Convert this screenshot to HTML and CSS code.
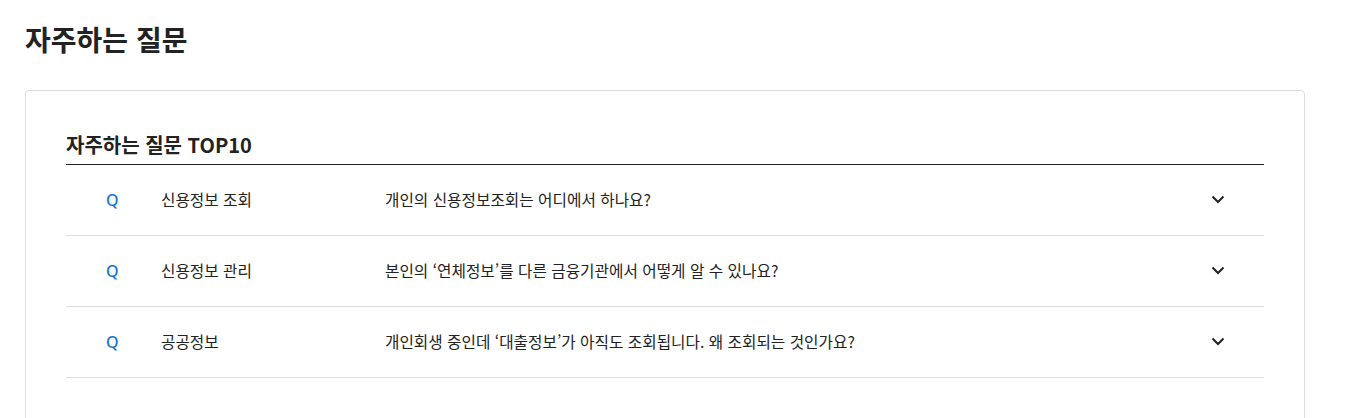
FILE: index.html
```html
<!DOCTYPE html>
<html lang="ko">
<head>
<meta charset="utf-8">
<title>자주하는 질문</title>
<link rel="stylesheet" href="styles.css">
</head>
<body>
<main class="page">
  <h1 class="page-title">자주하는 질문</h1>
  <section class="card">
    <h2 class="card-title">자주하는 질문 TOP10</h2>
    <ul class="faq-list">
      <li class="faq-row">
        <span class="faq-q">Q</span>
        <span class="faq-cat">신용정보 조회</span>
        <span class="faq-text">개인의 신용정보조회는 어디에서 하나요?</span>
        <span class="faq-toggle"><svg width="14" height="9" viewBox="0 0 14 9"><path d="M1.5 1.5 L7 7 L12.5 1.5" fill="none" stroke="#222" stroke-width="2"/></svg></span>
      </li>
      <li class="faq-row">
        <span class="faq-q">Q</span>
        <span class="faq-cat">신용정보 관리</span>
        <span class="faq-text">본인의 ‘연체정보’를 다른 금융기관에서 어떻게 알 수 있나요?</span>
        <span class="faq-toggle"><svg width="14" height="9" viewBox="0 0 14 9"><path d="M1.5 1.5 L7 7 L12.5 1.5" fill="none" stroke="#222" stroke-width="2"/></svg></span>
      </li>
      <li class="faq-row">
        <span class="faq-q">Q</span>
        <span class="faq-cat">공공정보</span>
        <span class="faq-text">개인회생 중인데 ‘대출정보’가 아직도 조회됩니다. 왜 조회되는 것인가요?</span>
        <span class="faq-toggle"><svg width="14" height="9" viewBox="0 0 14 9"><path d="M1.5 1.5 L7 7 L12.5 1.5" fill="none" stroke="#222" stroke-width="2"/></svg></span>
      </li>
    </ul>
  </section>
</main>
</body>
</html>
```
FILE: styles.css
```css
* { box-sizing: border-box; }
html, body { margin: 0; padding: 0; background: #fff; }
body {
  font-family: "Noto Sans CJK KR", "Noto Sans", sans-serif;
  color: #222;
}
.page { padding: 20px 25px 0; }
.page-title {
  margin: 0;
  font-size: 28px;
  font-weight: 700;
  line-height: 38px;
  color: #222;
}
.card {
  width: 1280px;
  margin-top: 32px;
  border: 1px solid #ddd;
  border-radius: 4px;
  padding: 40px 40px 60px;
}
.card-title {
  margin: 0;
  font-size: 20px;
  font-weight: 700;
  line-height: 28px;
  padding-bottom: 5px;
  border-bottom: 1px solid #222;
  color: #222;
}
.faq-list { list-style: none; margin: 0; padding: 0; }
.faq-row {
  display: grid;
  grid-template-columns: 95px 224px 1fr 53px;
  align-items: center;
  height: 71px;
  padding-bottom: 1px;
  border-bottom: 1px solid #ddd;
  font-size: 15.7px;
  color: #222;
}
.faq-q {
  padding-left: 40px;
  color: #1673d1;
  font-family: "Noto Sans", sans-serif;
  font-weight: 500;
  font-size: 16px;
}
.faq-toggle { display: flex; align-items: center; }
.faq-toggle svg { display: block; }
```
